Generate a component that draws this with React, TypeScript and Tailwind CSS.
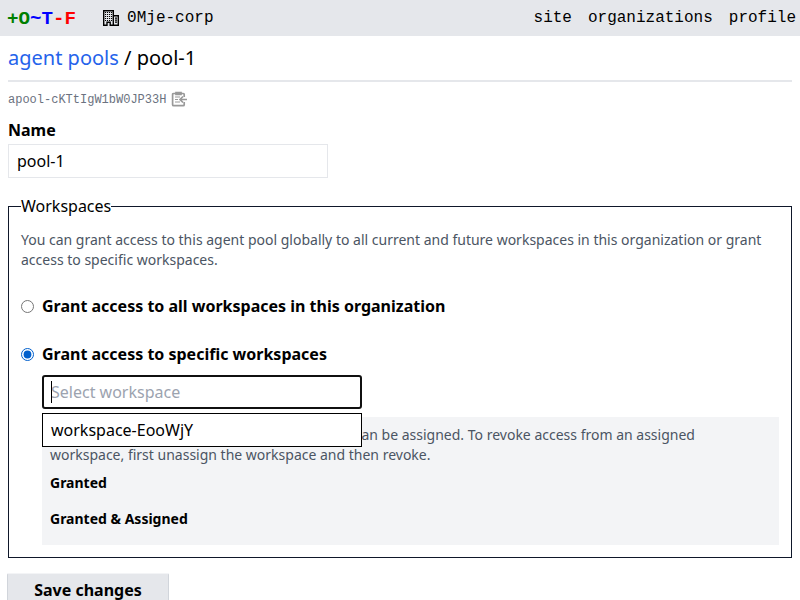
import React from "react";

const logo: [string, string][] = [
  ["+", "text-[#008000]"],
  ["O", "text-[#008000]"],
  ["~", "text-[#0000ff]"],
  ["T", "text-[#0000ff]"],
  ["-", "text-[#ff0000]"],
  ["F", "text-[#ff0000]"],
];

function BuildingIcon() {
  return (
    <svg className="h-4 w-4" viewBox="0 0 16 16" fill="none" stroke="currentColor" strokeWidth="1.4">
      <path d="M.7.7h9.6v14.6H7.2v-3H4v3H.7zM10.3 5.7h5v9.6h-5" />
      <path stroke="none" fill="currentColor" d="M2 2h1.1v1.1H2zM4 2h1.1v1.1H4zM6 2h1.1v1.1H6zM8 2h1.1v1.1H8zM2 4h1.1v1.1H2zM4 4h1.1v1.1H4zM6 4h1.1v1.1H6zM8 4h1.1v1.1H8zM2 6h1.1v1.1H2zM4 6h1.1v1.1H4zM6 6h1.1v1.1H6zM8 6h1.1v1.1H8zM2 8h1.1v1.1H2zM4 8h1.1v1.1H4zM6 8h1.1v1.1H6zM8 8h1.1v1.1H8zM2 10h1.1v1.1H2zM4 10h1.1v1.1H4zM6 10h1.1v1.1H6zM8 10h1.1v1.1H8zM12 7.5h2v1.2h-2zM12 9.5h2v1.2h-2zM12 11.5h2v1.2h-2z" />
    </svg>
  );
}

function ClipboardIcon() {
  return (
    <svg className="mb-0.5 h-4 w-4 text-[#999]" viewBox="0 0 16 16" fill="none" stroke="currentColor" strokeWidth="1.7">
      <path d="M13.2 6V3.5q0-1-1-1H2.8q-1.2 0-1.2 1v10.2q0 1 1.2 1h9.4q1 0 1-1V11" />
      <path fill="currentColor" d="M5 1.5h5v1.8H5z" />
      <path strokeWidth="1.2" d="M4 6h5M4 8.5h3M4 11h5" />
      <path d="M16 8.5H9m3-3-3 3 3 3" />
    </svg>
  );
}

export default function App() {
  return (
    <div className="h-[600px] overflow-hidden bg-white font-['Noto_Sans',sans-serif] text-base text-black">
      <header className="flex h-9 items-center bg-gray-200 px-2 font-['Liberation_Mono',monospace]">
        <a className="-ml-px flex pt-0.5 text-[19.2px] font-bold">
          {logo.map(([c, color]) => <span key={c} className={color}>{c}</span>)}
        </a>
        <div className="ml-[27px] flex items-center gap-2"><BuildingIcon /><span>0Mje-corp</span></div>
        <nav className="-mr-1 ml-auto flex gap-4"><a>site</a><a>organizations</a><a>profile</a></nav>
      </header>
      <main className="flex flex-col px-2 pt-2">
        <h2 className="border-b-2 border-gray-200 pb-2 text-xl"><a className="text-[#2563eb]">agent pools</a> / pool-1</h2>
        <div className="mt-2 flex h-5 items-center gap-[5px] font-['Liberation_Mono',monospace] text-xs text-[#6b7280]">
          <span>apool-cKTtIgW1bW0JP33H</span><ClipboardIcon />
        </div>
        <label className="mt-2 font-bold">Name</label>
        <input className="mt-0.5 h-[34px] w-80 border border-gray-200 px-2" defaultValue="pool-1" />
        <fieldset className="mt-4 h-[364px] border border-[#0f172a] px-3">
          <legend>Workspaces</legend>
          <p className="mt-3 text-sm text-[#4b5563]">You can grant access to this agent pool globally to all current and future workspaces in this organization or grant access to specific workspaces.</p>
          <label className="mt-6 flex items-center gap-2 font-bold"><input type="radio" name="access" />Grant access to all workspaces in this organization</label>
          <label className="mt-6 flex items-center gap-2 font-bold"><input className="accent-[#005fcc]" type="radio" name="access" defaultChecked />Grant access to specific workspaces</label>
          <div className="relative mt-[9px] ml-[21px]">
            <input className="block h-[34px] w-80 rounded-[3px] border-2 border-[#101010] px-[7px] outline-none placeholder:text-[#9ca3af]" placeholder="Select workspace" />
            <span className="absolute top-1.5 left-[9px] h-[22px] w-px bg-black" />
            <div className="absolute top-[38px] left-0 h-[34px] w-80 border border-black bg-white px-2 py-1">workspace-EooWjY</div>
            <div className="mt-2 h-32 bg-gray-100 p-2 text-sm text-[#4b5563]">
              <p><span className="mr-0.5">Only</span> workspaces that have been given access can be assigned. To revoke access from an assigned<br />workspace, first unassign the workspace and then revoke.</p>
              <h3 className="mt-2 font-bold text-black">Granted</h3>
              <h3 className="mt-4 font-bold text-black">Granted &amp; Assigned</h3>
            </div>
          </div>
        </fieldset>
        <button className="mt-[15px] -ml-px h-[34px] w-[162px] rounded-xs border border-[#d1d5db] border-t-[#f3f4f6] bg-gray-200 font-bold">Save changes</button>
      </main>
    </div>
  );
}
